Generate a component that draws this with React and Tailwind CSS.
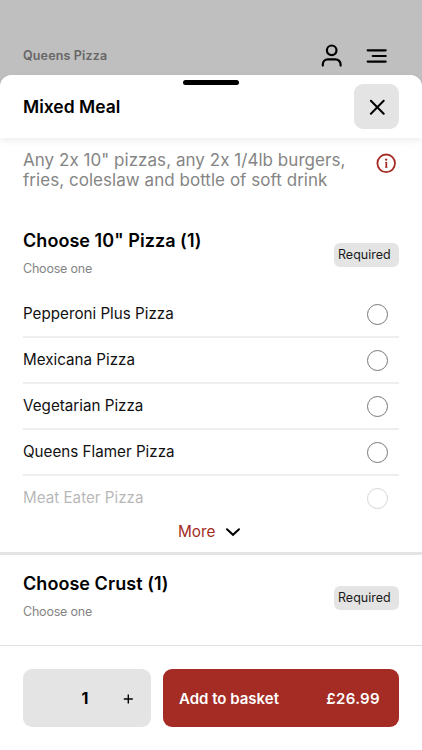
import React, { useState } from 'react';

const pizzas = [
  { id: 1, name: 'Pepperoni Plus Pizza' },
  { id: 2, name: 'Mexicana Pizza' },
  { id: 3, name: 'Vegetarian Pizza' },
  { id: 4, name: 'Queens Flamer Pizza' },
  { id: 5, name: 'Meat Eater Pizza', faded: true },
];

function GroupHeader({ title, hint }) {
  return (
    <div className="flex items-start justify-between px-[23px]">
      <div>
        <h2 className="text-[18px] leading-6 font-semibold tracking-[0.05px] text-black">{title}</h2>
        <p className="mt-[7px] text-[12.5px] leading-[18px] tracking-[-0.2px] text-[#858585]">{hint}</p>
      </div>
      <span className="mt-[14px] flex h-6 w-[65px] items-center rounded-md bg-[#e4e4e4] pl-[4px] text-[12.5px] text-[#1a1a1a]">
        Required
      </span>
    </div>
  );
}

function App() {
  const [selected, setSelected] = useState(null);
  const [quantity, setQuantity] = useState(1);

  return (
    <div className="flex h-[750px] w-full flex-col overflow-hidden bg-[#bfbfbf] font-[Inter,sans-serif] [font-feature-settings:'calt'_0]">
      <div className="flex h-[75px] shrink-0 items-end justify-between pr-[33px] pb-[6px] pl-[23px]">
        <span className="mb-[4px] text-[12.5px] leading-[18px] font-semibold tracking-[0.15px] text-[#666]">Queens Pizza</span>
        <div className="flex items-center">
          <svg className="h-[26px] w-[24px]" viewBox="0 0 24 26" fill="none" stroke="black" strokeWidth="2.2" strokeLinecap="round">
            <circle cx="11.7" cy="7.3" r="4.8" />
            <path d="M2.8 22.6v-1.2a5 5 0 0 1 5-5h7.8a5 5 0 0 1 5 5v1.2" />
          </svg>
          <svg className="ml-[21px] h-[26px] w-[24px]" viewBox="0 0 24 26" fill="none" stroke="black" strokeWidth="2.2" strokeLinecap="round">
            <path d="M2.7 7.3h18M7.7 13h13M2.7 18.6h18" />
          </svg>
        </div>
      </div>

      <div className="flex min-h-0 flex-1 flex-col rounded-t-xl bg-white">
        <div className="relative z-10 flex h-[63px] shrink-0 items-center justify-between rounded-t-xl bg-white pr-[23px] pl-[23px] shadow-[0_3px_7px_rgba(0,0,0,0.07)]">
          <div className="absolute top-[5px] left-[183px] h-[5px] w-14 rounded-full bg-black" />
          <h1 className="text-[17.5px] leading-6 font-semibold text-black">Mixed Meal</h1>
          <button className="flex h-[45px] w-[45px] items-center justify-center rounded-[9px] bg-[#e4e4e4]">
            <svg className="h-4 w-4" viewBox="0 0 16 16" fill="none" stroke="black" strokeWidth="2" strokeLinecap="round">
              <path d="M1.9 1.8l12.8 12.9M14.7 1.8L1.9 14.7" />
            </svg>
          </button>
        </div>

        <div className="min-h-0 flex-1 overflow-hidden">
          <div className="flex justify-between pt-[12px] pr-[26px] pl-[23px]">
            <p className="text-[17px] leading-5 tracking-[0.04px] whitespace-nowrap text-[#858585]">
              Any 2x 10" pizzas, any 2x 1/4lb burgers,
              <br />
              fries, coleslaw and bottle of soft drink
            </p>
            <svg className="mt-[3px] h-5 w-5 shrink-0" viewBox="0 0 20 20" fill="none" stroke="#a42c25" strokeWidth="1.8">
              <circle cx="10.2" cy="10.3" r="8.8" />
              <path d="M10.3 9v5.6" strokeWidth="1.7" />
              <path d="M9 9.4h1.3M9 14.2h2.6" strokeWidth="0.8" />
              <circle cx="10.2" cy="6.7" r="1.15" fill="#a42c25" stroke="none" />
            </svg>
          </div>

          <section className="pt-[39px]">
            <GroupHeader title={'Choose 10" Pizza (1)'} hint="Choose one" />
            <ul className="mt-[14px] px-[23px]">
              {pizzas.map((pizza) => (
                <li key={pizza.id} className={pizza.faded ? 'opacity-30' : 'border-b-2 border-[#eee]'}>
                  <button
                    onClick={() => setSelected(pizza.id)}
                    className="flex h-[44px] w-full items-center justify-between pr-[11px] text-[15.2px] text-[#111]"
                  >
                    {pizza.name}
                    <span className="flex h-[21px] w-[21px] items-center justify-center rounded-full border border-[#777]">
                      {selected === pizza.id && <span className="h-3 w-3 rounded-full bg-[#a42c25]" />}
                    </span>
                  </button>
                </li>
              ))}
            </ul>
            <button className="flex h-[32px] w-full items-center pb-[8px] pl-[178px] text-[15.3px] text-[#a42c25]">
              More
              <svg className="ml-[10px] h-4 w-4" viewBox="0 0 16 16" fill="none" stroke="black" strokeWidth="2" strokeLinecap="round">
                <path d="M2 5.2l6 5.6 6-5.6" />
              </svg>
            </button>
          </section>

          <section className="border-t-[3px] border-[#e4e4e4] pt-[17px]">
            <GroupHeader title="Choose Crust (1)" hint="Choose one" />
          </section>
        </div>

        <div className="flex h-[105px] shrink-0 gap-3 border-t border-[#e0e0e0] px-[23px] pt-[23px]">
          <div className="flex h-[58px] w-[128px] items-center rounded-[9px] bg-[#e4e4e4]">
            <span className="ml-[50px] w-6 text-center text-[16px] font-bold text-black">{quantity}</span>
            <button onClick={() => setQuantity(quantity + 1)} className="mt-[2px] ml-[26px]">
              <svg className="h-[10px] w-[10px]" viewBox="0 0 10 10" fill="none" stroke="black" strokeWidth="1.4">
                <path d="M5.3 .5v9M.8 5h9" />
              </svg>
            </button>
          </div>
          <button className="flex h-[58px] flex-1 items-center justify-between rounded-[9px] bg-[#a42c25] pt-[2px] pr-[19px] pl-4 text-[15px] font-semibold text-white">
            <span>Add to basket</span>
            <span className="tracking-[0.35px]">£26.99</span>
          </button>
        </div>
      </div>
    </div>
  );
}

export default App;
